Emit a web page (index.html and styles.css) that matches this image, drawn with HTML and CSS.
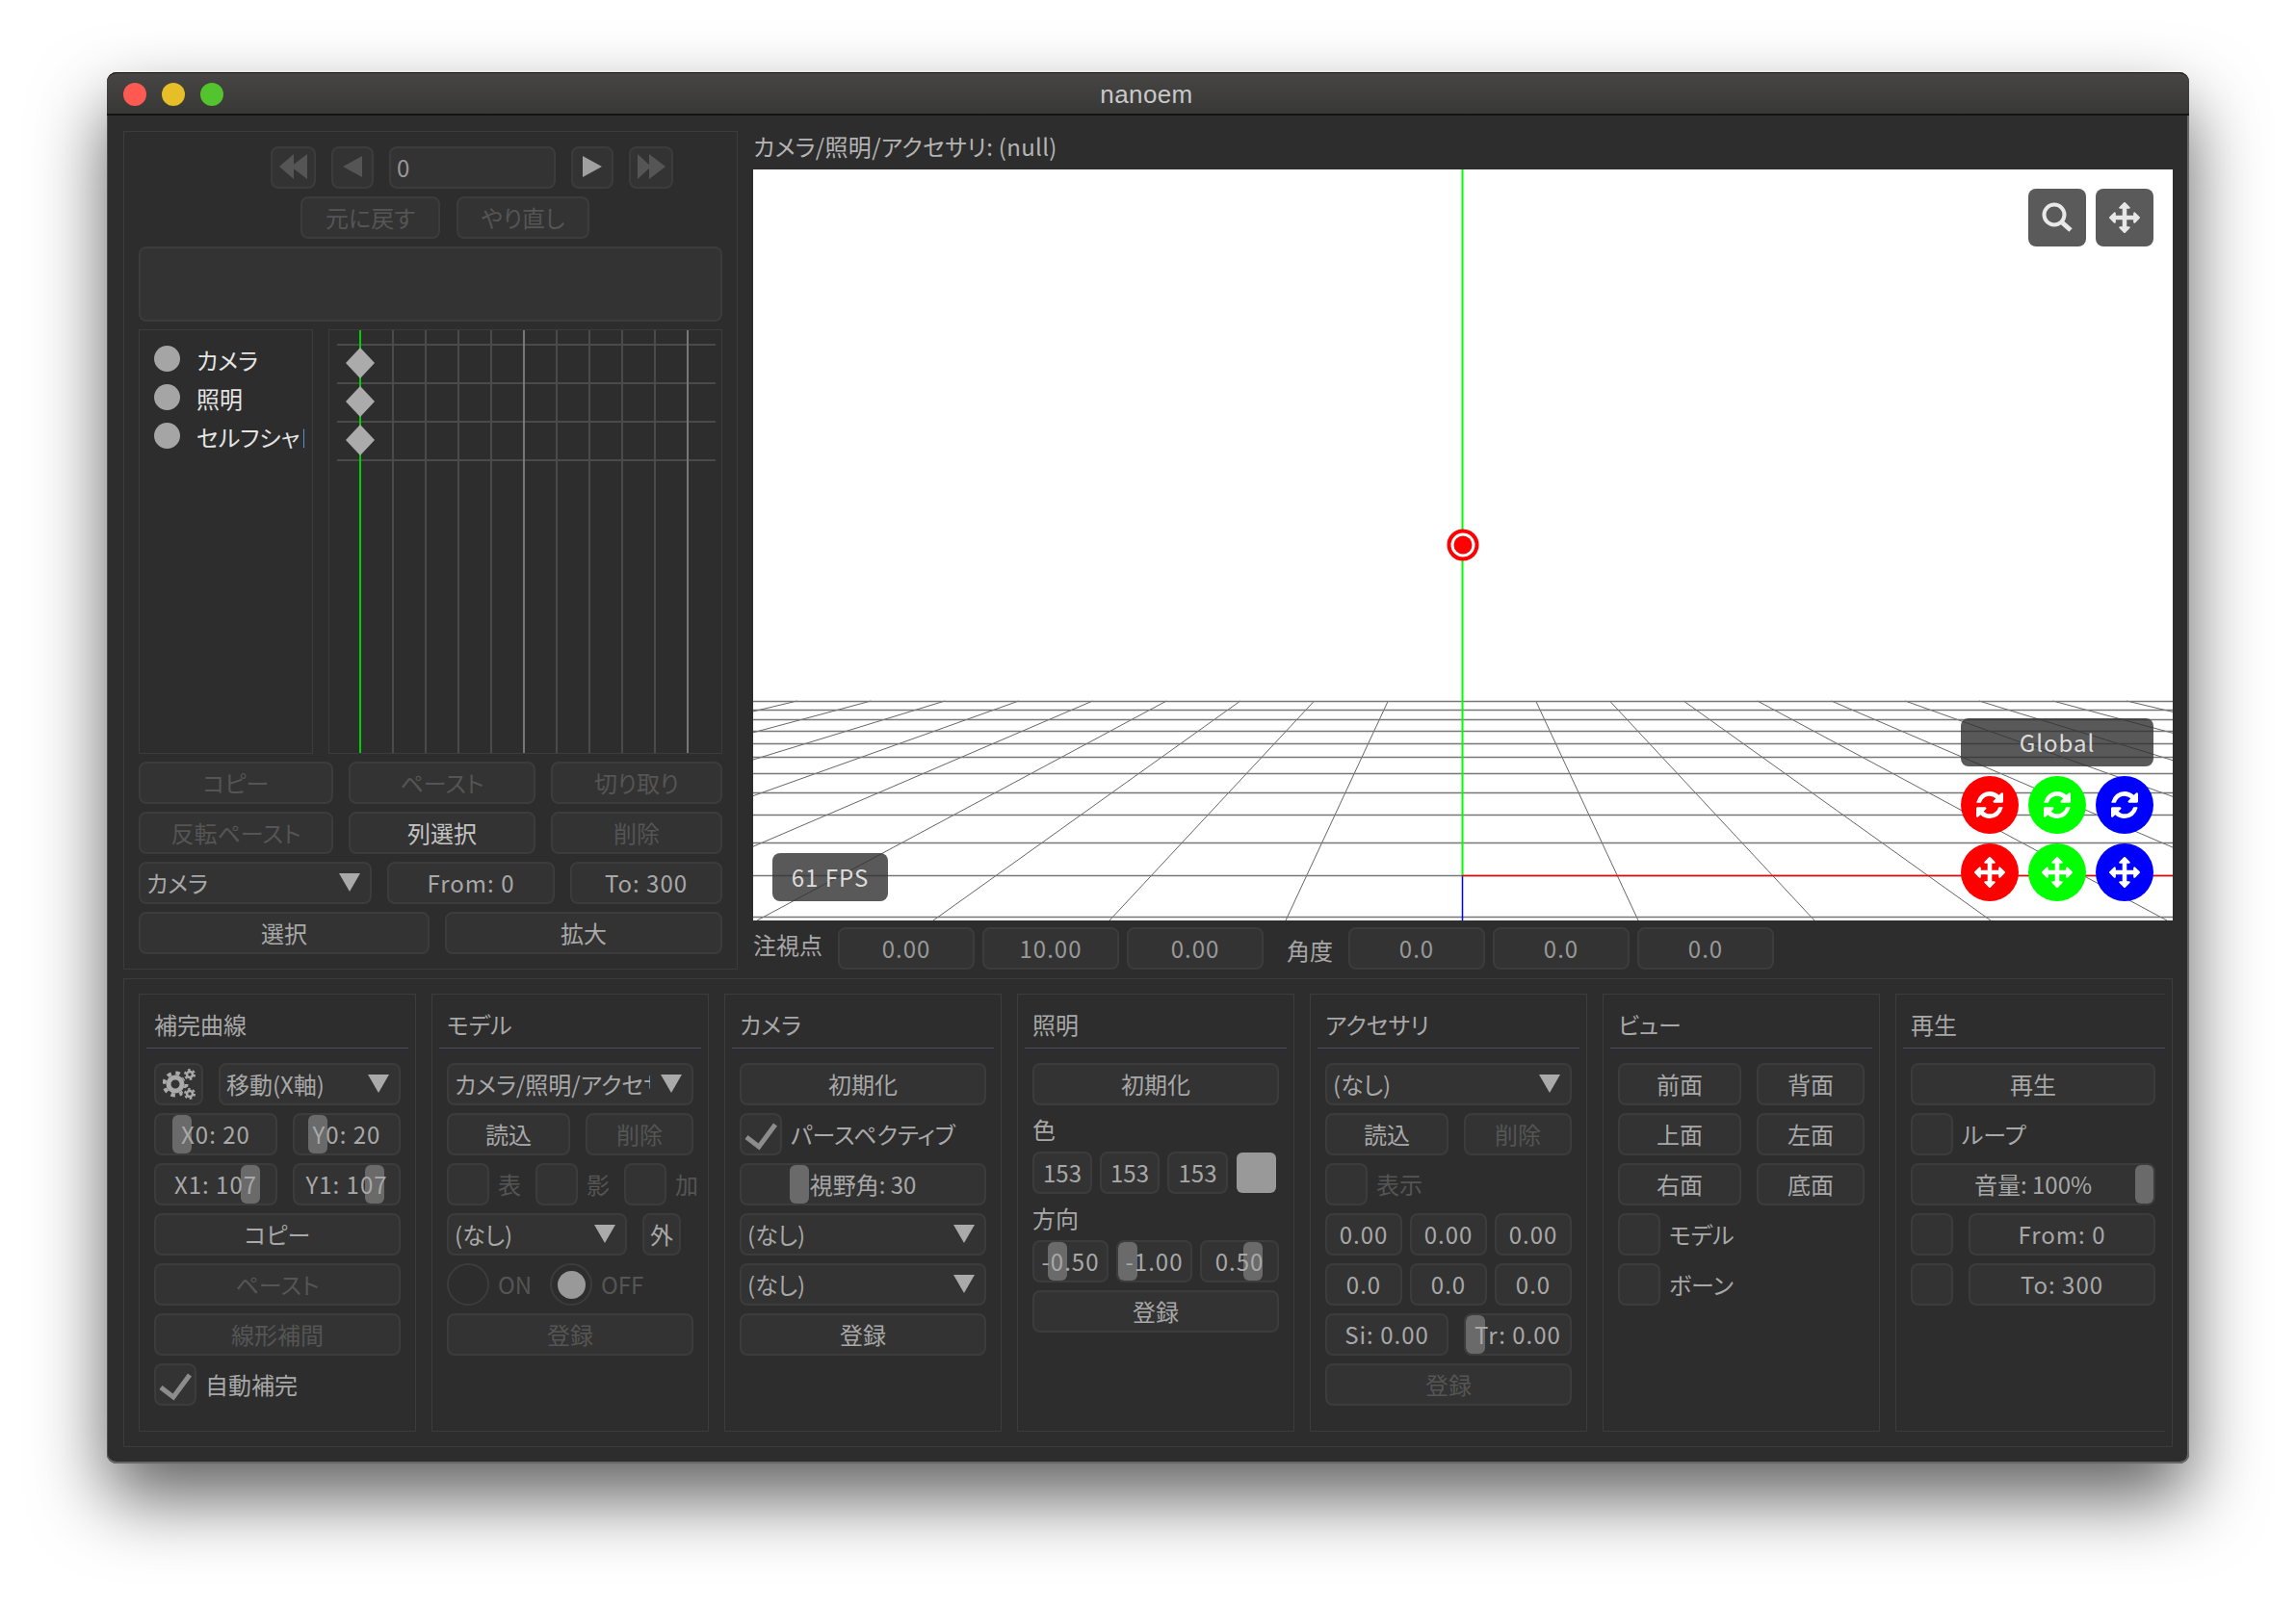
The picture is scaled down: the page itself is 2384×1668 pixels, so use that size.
FILE: index.html
```html
<!DOCTYPE html>
<html lang="ja">
<head>
  <meta charset="UTF-8">
  <title>nanoem</title>
  <link rel="stylesheet" href="styles.css">
</head>
<body>

  <svg class="defs" width="0" height="0">
    <symbol id="i-sync" viewBox="0 0 1536 1536">
      <path fill="currentColor" d="M1511 928q0 5-1 7-64 268-268 434.500t-478 166.500q-146 0-282.500-55t-243.500-157l-129 129q-19 19-45 19t-45-19-19-45v-448q0-26 19-45t45-19h448q26 0 45 19t19 45-19 45l-137 137q71 66 161 102t187 36q134 0 250-65t186-179q11-17 53-117 8-23 30-23h192q13 0 22.500 9.500t9.500 22.500zm25-800v448q0 26-19 45t-45 19h-448q-26 0-45-19t-19-45 19-45l138-138q-148-137-349-137-134 0-250 65t-186 179q-11 17-53 117-8 23-30 23h-199q-13 0-22.500-9.500t-9.500-22.500v-7q65-268 270-434.500t480-166.500q146 0 284 55.500t245 156.500l130-129q19-19 45-19t45 19 19 45z"/>
    </symbol>
    <symbol id="i-move" viewBox="0 0 1792 1792">
      <path fill="currentColor" d="M1792 896q0 26-19 45l-256 256q-19 19-45 19t-45-19-19-45v-128h-384v384h128q26 0 45 19t19 45-19 45l-256 256q-19 19-45 19t-45-19l-256-256q-19-19-19-45t19-45 45-19h128v-384h-384v128q0 26-19 45t-45 19-45-19l-256-256q-19-19-19-45t19-45l256-256q19-19 45-19t45 19 19 45v128h384v-384h-128q-26 0-45-19t-19-45 19-45l256-256q19-19 45-19t45 19l256 256q19 19 19 45t-19 45-45 19h-128v384h384v-128q0-26 19-45t45-19 45 19l256 256q19 19 19 45z"/>
    </symbol>
    <symbol id="i-check" viewBox="0 0 44 44">
      <polyline points="7,25 20,35 37,12" fill="none" stroke="#8c8c8c" stroke-width="5"/>
    </symbol>
  </svg>

  <div class="window">
    <div class="titlebar">
      <div class="lights">
        <span class="light red"></span>
        <span class="light yellow"></span>
        <span class="light green"></span>
      </div>
      nanoem
    </div>

    <div class="content">
      <div class="top">

        <div class="track">
          <div class="transport">
            <div class="btn w47"><svg class="tri" width="29" height="26"><polygon points="15,0 15,26 0,13"/><polygon points="29,0 29,26 12,13"/></svg></div>
            <div class="btn w44"><svg class="tri" width="20" height="22"><polygon points="20,0 20,22 0,11"/></svg></div>
            <div class="btn field frame">0</div>
            <div class="btn w44"><svg class="tri on" width="20" height="22"><polygon points="0,0 20,11 0,22"/></svg></div>
            <div class="btn w46"><svg class="tri" width="29" height="26"><polygon points="0,0 14,13 0,26"/><polygon points="12,0 29,13 12,26"/></svg></div>
          </div>
          <div class="undo">
            <div class="btn dis w145">元に戻す</div>
            <div class="btn dis w138">やり直し</div>
          </div>
          <div class="notes"></div>

          <div class="tracks">
            <div class="list">
              <div class="list-item"><span class="dot"></span><span class="list-label">カメラ</span></div>
              <div class="list-item"><span class="dot"></span><span class="list-label">照明</span></div>
              <div class="list-item"><span class="dot"></span><span class="list-label">セルフシャドウ</span></div>
            </div>
            <div class="timeline">
              <svg width="407" height="439">
                <g stroke="#4a4a4a" stroke-width="2">
                  <line x1="66" y1="0" x2="66" y2="439"/>
                  <line x1="100" y1="0" x2="100" y2="439"/>
                  <line x1="134" y1="0" x2="134" y2="439"/>
                  <line x1="168" y1="0" x2="168" y2="439"/>
                  <line x1="236" y1="0" x2="236" y2="439"/>
                  <line x1="270" y1="0" x2="270" y2="439"/>
                  <line x1="304" y1="0" x2="304" y2="439"/>
                  <line x1="338" y1="0" x2="338" y2="439"/>
                  <line x1="8" y1="15" x2="401" y2="15"/>
                  <line x1="8" y1="55" x2="401" y2="55"/>
                  <line x1="8" y1="95" x2="401" y2="95"/>
                  <line x1="8" y1="135" x2="401" y2="135"/>
                </g>
                <g stroke="#777" stroke-width="2">
                  <line x1="202" y1="0" x2="202" y2="439"/>
                  <line x1="372" y1="0" x2="372" y2="439"/>
                </g>
                <line x1="32" y1="0" x2="32" y2="439" stroke="#00d000" stroke-width="2"/>
                <g fill="#ababab">
                  <polygon points="32,18 47,34 32,50 17,34"/>
                  <polygon points="32,58 47,74 32,90 17,74"/>
                  <polygon points="32,98 47,114 32,130 17,114"/>
                </g>
              </svg>
            </div>
          </div>

          <div class="grid-a">
            <div class="btn dis">コピー</div>
            <div class="btn dis">ペースト</div>
            <div class="btn dis">切り取り</div>
          </div>
          <div class="grid-a">
            <div class="btn dis">反転ペースト</div>
            <div class="btn bright">列選択</div>
            <div class="btn dis">削除</div>
          </div>
          <div class="grid-c">
            <div class="btn combo"><span class="combo-text">カメラ</span><i class="arrow"></i></div>
            <div class="btn lat">From: 0</div>
            <div class="btn lat">To: 300</div>
          </div>
          <div class="grid-d">
            <div class="btn">選択</div>
            <div class="btn">拡大</div>
          </div>
        </div>

        <div class="stage">
          <div class="stage-title">カメラ/照明/アクセサリ: (null)</div>
          <div class="viewport">
            <svg class="scene" width="1474" height="780">
              <g stroke="#666" stroke-width="1">
                <line x1="659.3" y1="552" x2="553" y2="780"/>
                <line x1="582.6" y1="552" x2="370" y2="780"/>
                <line x1="505.9" y1="552" x2="187" y2="780"/>
                <line x1="429.2" y1="552" x2="4" y2="780"/>
                <line x1="352.5" y1="552" x2="-179" y2="780"/>
                <line x1="275.8" y1="552" x2="-362" y2="780"/>
                <line x1="199.1" y1="552" x2="-545" y2="780"/>
                <line x1="122.4" y1="552" x2="-728" y2="780"/>
                <line x1="45.7" y1="552" x2="-911" y2="780"/>
                <line x1="812.7" y1="552" x2="919" y2="780"/>
                <line x1="889.4" y1="552" x2="1102" y2="780"/>
                <line x1="966.1" y1="552" x2="1285" y2="780"/>
                <line x1="1042.8" y1="552" x2="1468" y2="780"/>
                <line x1="1119.5" y1="552" x2="1651" y2="780"/>
                <line x1="1196.2" y1="552" x2="1834" y2="780"/>
                <line x1="1272.9" y1="552" x2="2017" y2="780"/>
                <line x1="1349.6" y1="552" x2="2200" y2="780"/>
                <line x1="1426.3" y1="552" x2="2383" y2="780"/>
              </g>
              <g stroke="#777" stroke-width="1.500">
                <line x1="0" y1="552.5" x2="1474" y2="552.5"/>
                <line x1="0" y1="561.5" x2="1474" y2="561.5"/>
                <line x1="0" y1="571.5" x2="1474" y2="571.5"/>
                <line x1="0" y1="583.5" x2="1474" y2="583.5"/>
                <line x1="0" y1="596.5" x2="1474" y2="596.5"/>
                <line x1="0" y1="610.5" x2="1474" y2="610.5"/>
                <line x1="0" y1="627.5" x2="1474" y2="627.5"/>
                <line x1="0" y1="647.5" x2="1474" y2="647.5"/>
                <line x1="0" y1="670.5" x2="1474" y2="670.5"/>
                <line x1="0" y1="699.5" x2="1474" y2="699.5"/>
                <line x1="0" y1="733.5" x2="1474" y2="733.5"/>
                <line x1="0" y1="776.5" x2="1474" y2="776.5"/>
              </g>
              <line x1="736.5" y1="0" x2="736.5" y2="733" stroke="#00ff00" stroke-width="2"/>
              <line x1="736.5" y1="733" x2="736.5" y2="780" stroke="#0000ff" stroke-width="1.500"/>
              <line x1="736" y1="733.5" x2="1474" y2="733.5" stroke="#f00000" stroke-width="1.500"/>
              <circle cx="737" cy="390" r="14.500" fill="#fff" stroke="#ff0000" stroke-width="4"/>
              <circle cx="737" cy="390" r="9.500" fill="#ff0000"/>
            </svg>

            <div class="view-tools">
              <div class="tool">
                <svg width="44" height="44"><circle cx="19" cy="19" r="10.500" fill="none" stroke="currentColor" stroke-width="4"/><line x1="27" y1="27" x2="36" y2="35" stroke="currentColor" stroke-width="5"/></svg>
              </div>
              <div class="tool"><svg width="32" height="32"><use href="#i-move"/></svg></div>
            </div>

            <div class="fps lat">61 FPS</div>

            <div class="gizmo">
              <div class="global lat">Global</div>
              <div class="gizmo-grid">
                <div class="axis x"><svg width="28" height="28"><use href="#i-sync"/></svg></div>
                <div class="axis y"><svg width="28" height="28"><use href="#i-sync"/></svg></div>
                <div class="axis z"><svg width="28" height="28"><use href="#i-sync"/></svg></div>
                <div class="axis x"><svg width="32" height="32"><use href="#i-move"/></svg></div>
                <div class="axis y"><svg width="32" height="32"><use href="#i-move"/></svg></div>
                <div class="axis z"><svg width="32" height="32"><use href="#i-move"/></svg></div>
              </div>
            </div>
          </div>

          <div class="values">
            <div class="val-label look">注視点</div>
            <div class="btn field-num lat">0.00</div>
            <div class="btn field-num lat">10.00</div>
            <div class="btn field-num lat">0.00</div>
            <div class="val-label angle">角度</div>
            <div class="btn field-num lat">0.0</div>
            <div class="btn field-num lat">0.0</div>
            <div class="btn field-num lat">0.0</div>
          </div>
        </div>
      </div>

      <div class="dock">

        <div class="panel">
          <h3>補完曲線</h3>
          <div class="rows">
            <div class="row g-gear">
              <div class="btn icon">
                <svg width="34" height="32" viewBox="0 0 34 32">
                  <circle cx="13" cy="16" r="7" fill="none" stroke="#aaa" stroke-width="5"/>
                  <circle cx="13" cy="16" r="11.500" fill="none" stroke="#aaa" stroke-width="4" stroke-dasharray="4.500 4.530"/>
                  <circle cx="28" cy="6" r="7.500" fill="#333"/>
                  <circle cx="28" cy="26" r="7.500" fill="#333"/>
                  <circle cx="28" cy="6" r="3" fill="none" stroke="#aaa" stroke-width="2.500"/>
                  <circle cx="28" cy="6" r="5" fill="none" stroke="#aaa" stroke-width="2" stroke-dasharray="2.620 2.620"/>
                  <circle cx="28" cy="26" r="3" fill="none" stroke="#aaa" stroke-width="2.500"/>
                  <circle cx="28" cy="26" r="5" fill="none" stroke="#aaa" stroke-width="2" stroke-dasharray="2.620 2.620"/>
                </svg>
              </div>
              <div class="btn combo"><span class="combo-text">移動(X軸)</span><i class="arrow"></i></div>
            </div>
            <div class="row g-split">
              <div class="btn slider lat"><i class="grab" style="left:17px"></i><span>X0: 20</span></div>
              <div class="btn slider lat"><i class="grab" style="left:14px"></i><span>Y0: 20</span></div>
            </div>
            <div class="row g-split">
              <div class="btn slider lat"><i class="grab" style="left:88px"></i><span>X1: 107</span></div>
              <div class="btn slider lat"><i class="grab" style="left:73px"></i><span>Y1: 107</span></div>
            </div>
            <div class="btn">コピー</div>
            <div class="btn dis">ペースト</div>
            <div class="btn dis">線形補間</div>
            <div class="check-row">
              <div class="btn check"><svg width="44" height="44"><use href="#i-check"/></svg></div>
              <span>自動補完</span>
            </div>
          </div>
        </div>

        <div class="panel">
          <h3>モデル</h3>
          <div class="rows">
            <div class="btn combo"><span class="combo-text">カメラ/照明/アクセサリ</span><i class="arrow"></i></div>
            <div class="row g-split">
              <div class="btn">読込</div>
              <div class="btn dis">削除</div>
            </div>
            <div class="row g-flags">
              <div class="check-row dim"><div class="btn check"></div><span>表</span></div>
              <div class="check-row dim"><div class="btn check"></div><span>影</span></div>
              <div class="check-row dim"><div class="btn check"></div><span>加</span></div>
            </div>
            <div class="row g-bind">
              <div class="btn combo"><span class="combo-text">(なし)</span><i class="arrow"></i></div>
              <div class="btn">外</div>
            </div>
            <div class="row g-radio">
              <div class="radio-row"><span class="radio"></span><span>ON</span></div>
              <div class="radio-row"><span class="radio sel"></span><span>OFF</span></div>
            </div>
            <div class="btn dis">登録</div>
          </div>
        </div>

        <div class="panel">
          <h3>カメラ</h3>
          <div class="rows">
            <div class="btn">初期化</div>
            <div class="check-row">
              <div class="btn check"><svg width="44" height="44"><use href="#i-check"/></svg></div>
              <span>パースペクティブ</span>
            </div>
            <div class="btn slider"><i class="grab" style="left:50px"></i><span>視野角: 30</span></div>
            <div class="btn combo"><span class="combo-text">(なし)</span><i class="arrow"></i></div>
            <div class="btn combo"><span class="combo-text">(なし)</span><i class="arrow"></i></div>
            <div class="btn">登録</div>
          </div>
        </div>

        <div class="panel">
          <h3>照明</h3>
          <div class="rows">
            <div class="btn">初期化</div>
            <div class="sub-label">色</div>
            <div class="row g-color">
              <div class="btn">153</div>
              <div class="btn">153</div>
              <div class="btn">153</div>
              <div class="swatch"></div>
            </div>
            <div class="sub-label">方向</div>
            <div class="row g-dir">
              <div class="btn slider lat"><i class="grab" style="left:14px"></i><span>-0.50</span></div>
              <div class="btn slider lat"><i class="grab" style="left:0"></i><span>-1.00</span></div>
              <div class="btn slider lat"><i class="grab" style="left:43px"></i><span>0.50</span></div>
            </div>
            <div class="btn">登録</div>
          </div>
        </div>

        <div class="panel">
          <h3>アクセサリ</h3>
          <div class="rows">
            <div class="btn combo"><span class="combo-text">(なし)</span><i class="arrow"></i></div>
            <div class="row g-split">
              <div class="btn">読込</div>
              <div class="btn dis">削除</div>
            </div>
            <div class="check-row dim">
              <div class="btn check"></div>
              <span>表示</span>
            </div>
            <div class="row g-three">
              <div class="btn lat">0.00</div>
              <div class="btn lat">0.00</div>
              <div class="btn lat">0.00</div>
            </div>
            <div class="row g-three">
              <div class="btn lat">0.0</div>
              <div class="btn lat">0.0</div>
              <div class="btn lat">0.0</div>
            </div>
            <div class="row g-split">
              <div class="btn lat">Si: 0.00</div>
              <div class="btn slider lat"><i class="grab" style="left:0"></i><span>Tr: 0.00</span></div>
            </div>
            <div class="btn dis">登録</div>
          </div>
        </div>

        <div class="panel">
          <h3>ビュー</h3>
          <div class="rows">
            <div class="row g-split">
              <div class="btn">前面</div>
              <div class="btn">背面</div>
            </div>
            <div class="row g-split">
              <div class="btn">上面</div>
              <div class="btn">左面</div>
            </div>
            <div class="row g-split">
              <div class="btn">右面</div>
              <div class="btn">底面</div>
            </div>
            <div class="check-row"><div class="btn check"></div><span>モデル</span></div>
            <div class="check-row"><div class="btn check"></div><span>ボーン</span></div>
          </div>
        </div>

        <div class="panel panel-last">
          <h3>再生</h3>
          <div class="rows">
            <div class="btn">再生</div>
            <div class="check-row"><div class="btn check"></div><span>ループ</span></div>
            <div class="btn slider"><i class="grab" style="left:231px"></i><span>音量: 100%</span></div>
            <div class="row g-range">
              <div class="btn check"></div>
              <div class="btn lat">From: 0</div>
            </div>
            <div class="row g-range">
              <div class="btn check"></div>
              <div class="btn lat">To: 300</div>
            </div>
          </div>
        </div>

      </div>
    </div>
  </div>

</body>
</html>
```

FILE: styles.css
```css
* { box-sizing: border-box; }
html, body { height: 100%; }
body {
  margin: 0;
  background: #fff;
  font-family: "Noto Sans CJK JP", "Noto Sans", sans-serif;
  font-size: 24px;
  font-feature-settings: "palt";
  color: #a8a8a8;
  overflow: hidden;
}
.defs { position: absolute; }

.window {
  width: 2162px;
  height: 1445px;
  margin: 75px 0 0 111px;
  background: #2d2d2d;
  border-radius: 10px;
  box-shadow: inset 0 -2px 0 #666, inset 1px 0 0 #4c4c4c, inset -2px 0 0 #666, 0 36px 76px rgba(0,0,0,.62);
}
.titlebar {
  position: relative;
  height: 45px;
  padding-top: 3px;
  padding-right: 3px;
  display: flex;
  align-items: center;
  justify-content: center;
  background: linear-gradient(#464544, #383837);
  border-top: 1px solid #141414;
  border-bottom: 2px solid #141414;
  border-radius: 10px 10px 0 0;
  font-family: "Liberation Sans", sans-serif;
  font-size: 26px;
  letter-spacing: .4px;
  color: #c8c8c8;
}
.lights {
  position: absolute;
  left: 17px;
  top: 10px;
  display: flex;
  gap: 16px;
}
.light { width: 24px; height: 24px; border-radius: 50%; }
.light.red { background: #fe5a52; }
.light.yellow { background: #e5be28; }
.light.green { background: #53c42d; }

.content { padding: 16px 17px 0; }
.top { display: flex; gap: 16px; height: 871px; margin-bottom: 9px; }

/* shared widgets */
.btn {
  height: 44px;
  display: flex;
  align-items: center;
  justify-content: center;
  min-width: 0;
  padding-bottom: 2px;
  background: #333;
  border: 2px solid #3c3c3c;
  border-radius: 8px;
  white-space: nowrap;
}
.lat { letter-spacing: 1px; }
.dis { color: #555; }
.bright { color: #c4c4c4; }
.icon { padding: 0; }
.combo { justify-content: space-between; padding: 0 10px 2px 6px; color: #a8a8a8; }
.combo-text { flex: 1; min-width: 0; overflow: hidden; margin-right: 11px; }
.arrow {
  flex: none;
  width: 0;
  height: 0;
  border-left: 11px solid transparent;
  border-right: 11px solid transparent;
  border-top: 19px solid #aaa;
}
.slider { position: relative; overflow: hidden; }
.slider span { position: relative; }
.grab {
  position: absolute;
  top: 0;
  bottom: 0;
  width: 20px;
  background: #6a6a6a;
  border-radius: 6px;
}

/* left track panel */
.track {
  width: 638px;
  padding: 15px;
  border: 1px solid #3c3c3c;
  display: flex;
  flex-direction: column;
  gap: 8px;
}
.transport { display: flex; gap: 16px; padding-left: 137px; }
.w47 { width: 47px; }
.w44 { width: 44px; }
.w46 { width: 46px; }
.w145 { width: 145px; }
.w138 { width: 138px; }
.tri { fill: #555; }
.tri.on { fill: #a0a0a0; }
.frame { width: 173px; justify-content: flex-start; padding-left: 6px; color: #999; }
.undo { display: flex; gap: 17px; padding-left: 168px; }
.notes { height: 79px; background: #333; border: 2px solid #3c3c3c; border-radius: 8px; }
.tracks { display: flex; gap: 16px; height: 441px; }
.list { width: 181px; padding: 9px 0 0 15px; border: 1px solid #3c3c3c; }
.list-item { display: flex; align-items: center; gap: 17px; height: 40px; }
.dot { flex: none; width: 27px; height: 27px; border-radius: 50%; background: #a5a5a5; }
.list-label { width: 112px; overflow: hidden; white-space: nowrap; color: #e4e4e4; padding-top: 2px; }
.timeline { width: 409px; border: 1px solid #3c3c3c; }
.timeline svg { display: block; }
.grid-a { display: grid; grid-template-columns: 202px 194px 178px; gap: 16px; }
.grid-c { display: grid; grid-template-columns: 242px 174px 158px; gap: 16px; }
.grid-d { display: grid; grid-template-columns: 302px 288px; gap: 16px; }

/* viewport */
.stage { width: 1474px; }
.stage-title { height: 40px; line-height: 32px; letter-spacing: .3px; color: #b4b4b4; }
.viewport { position: relative; height: 780px; background: #fff; overflow: hidden; }
.scene { display: block; }
.view-tools { position: absolute; top: 20px; right: 20px; display: flex; gap: 10px; }
.tool {
  width: 60px;
  height: 60px;
  display: flex;
  align-items: center;
  justify-content: center;
  background: #5a5a5a;
  border-radius: 8px;
  color: #e8e8e8;
}
.fps, .global {
  display: flex;
  align-items: center;
  justify-content: center;
  height: 50px;
  padding-bottom: 2px;
  border-radius: 8px;
  background: rgba(48,48,48,.8);
  color: #dcdcdc;
}
.fps { position: absolute; left: 20px; bottom: 20px; width: 120px; }
.gizmo { position: absolute; right: 20px; top: 570px; width: 200px; display: flex; flex-direction: column; gap: 10px; }
.gizmo-grid { display: grid; grid-template-columns: repeat(3, 60px); gap: 10px; }
.axis {
  width: 60px;
  height: 60px;
  display: flex;
  align-items: center;
  justify-content: center;
  border-radius: 50%;
  color: #fff;
}
.axis.x { background: #ff0000; }
.axis.y { background: #00ff00; }
.axis.z { background: #0000ff; }

.values { display: flex; gap: 8px; margin-top: 7px; }
.val-label { height: 44px; display: flex; align-items: center; }
.val-label.look { width: 80px; padding-bottom: 10px; }
.val-label.angle { width: 56px; margin-left: 16px; padding-top: 2px; }
.field-num { width: 142px; color: #999; }

/* bottom dock */
.dock {
  display: flex;
  gap: 16px;
  height: 487px;
  padding: 15px 0 15px 15px;
  border: 1px solid #3c3c3c;
  overflow: hidden;
}
.panel { flex: none; width: 288px; height: 455px; border: 1px solid #3c3c3c; }
.panel-last { width: 280px; border-right: 0; }
.panel h3 {
  height: 56px;
  margin: 0 7px;
  padding: 0 8px;
  line-height: 62px;
  font-size: 24px;
  font-weight: 400;
  color: #a8a8a8;
  border-bottom: 1px solid #4c4c5c;
}
.panel-last h3 { margin-right: 0; }
.rows { display: flex; flex-direction: column; gap: 8px; padding: 15px 15px 0; }
.panel-last .rows { padding-right: 10px; }
.row { display: grid; gap: 16px; }
.g-gear { grid-template-columns: 51px 189px; }
.g-split { grid-template-columns: 128px 112px; }
.g-bind { grid-template-columns: 187px 40px; }
.g-flags { grid-template-columns: 92px 92px 72px; gap: 0; }
.g-radio { grid-template-columns: 107px 100px; gap: 0; height: 44px; color: #555; }
.g-color { grid-template-columns: 62px 62px 63px 42px; gap: 8px; }
.g-dir { grid-template-columns: 79px 79px 82px; gap: 8px; }
.g-three { grid-template-columns: 80px 80px 80px; gap: 8px; }
.g-range { grid-template-columns: 44px 194px; }
.check-row { display: flex; align-items: center; gap: 9px; height: 44px; }
.check-row span { padding-bottom: 2px; }
.check-row.dim { color: #555; }
.check { width: 44px; flex: none; padding: 0; }
.check svg { flex: none; margin: -2px; }
.radio-row { display: flex; align-items: center; gap: 9px; }
.radio-row span:last-child { padding-bottom: 2px; }
.radio {
  width: 44px;
  height: 44px;
  flex: none;
  display: flex;
  align-items: center;
  justify-content: center;
  border: 2px solid #3c3c3c;
  border-radius: 50%;
}
.radio.sel::after {
  content: "";
  width: 29px;
  height: 29px;
  border-radius: 50%;
  background: #999;
}
.sub-label { height: 32px; line-height: 34px; }
.swatch { align-self: center; height: 42px; margin-left: 1px; background: #999; border-radius: 6px; }
```
